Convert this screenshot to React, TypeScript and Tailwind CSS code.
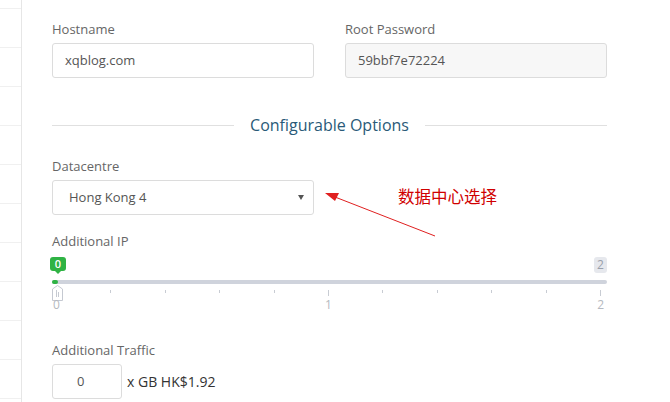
import React from "react"

const font = { fontFamily: '"Open Sans", "Noto Sans CJK SC", sans-serif' }

function Sidebar() {
  return (
    <div className="w-[22px] shrink-0 border-r border-[#e6e6e6] pt-[8px]">
      {Array.from({ length: 11 }).map((_, i) => (
        <div key={i} className="h-[39px] border-t border-[#f0f0f0]" />
      ))}
    </div>
  )
}

function Field({ label, children }: { label: string; children: React.ReactNode }) {
  return (
    <div className="flex flex-col">
      <label className="text-[13px] leading-[18px] text-[#666] mb-[5px]">{label}</label>
      {children}
    </div>
  )
}

function IpSlider() {
  const ticks = Array.from({ length: 11 })
  return (
    <div className="relative h-[62px] w-full">
      {/* value bubble */}
      <div className="absolute left-[-2px] top-[7px] flex flex-col items-center">
        <div className="h-[14px] w-[16px] rounded-[3px] bg-[#2fb344] text-white text-[11px] leading-[14px] text-center font-semibold">0</div>
        <div className="h-0 w-0 border-x-[3px] border-x-transparent border-t-[3px] border-t-[#2fb344]" />
      </div>
      {/* max bubble */}
      <div className="absolute right-0 top-[7px] h-[16px] w-[13px] rounded-[3px] bg-[#e6e8ed] text-[#9aa0ab] text-[12px] leading-[16px] text-center">2</div>
      {/* track */}
      <div className="absolute left-0 right-0 top-[30px] h-[4px] rounded-full bg-[#cfd3dc]" />
      <div className="absolute left-0 top-[30px] h-[4px] w-[6px] rounded-full bg-[#2fb344]" />
      {/* handle */}
      <svg className="absolute left-0 top-[35px]" width="11" height="16" viewBox="0 0 11 16">
        <path d="M5.5 0.5 L10.5 4 L10.5 15.5 L0.5 15.5 L0.5 4 Z" fill="#fff" stroke="#c5c9d1" />
        <line x1="4.5" y1="7" x2="4.5" y2="12" stroke="#c5c9d1" />
        <line x1="6.5" y1="7" x2="6.5" y2="12" stroke="#c5c9d1" />
      </svg>
      {/* ticks */}
      <div className="absolute left-[4px] right-[6px] top-[40px] flex justify-between">
        {ticks.map((_, i) => (
          <div key={i} className={`w-px bg-[#c8ccd3] ${i === 5 || i === 10 ? "h-[6px]" : "h-[3px]"}`} />
        ))}
      </div>
      <div className="absolute left-[1px] right-[3px] top-[48px] flex justify-between text-[12px] leading-[14px] text-[#b5b9c0]">
        <span>0</span>
        <span>1</span>
        <span>2</span>
      </div>
    </div>
  )
}

export default function App() {
  return (
    <div className="w-[670px] h-[402px] bg-white flex overflow-hidden" style={font}>
      <Sidebar />
      <div className="relative w-[555px] ml-[30px] pt-[20px]">
        <div className="grid grid-cols-2 gap-x-[31px]">
          <Field label="Hostname">
            <div className="h-[35px] border border-[#dcdcdc] rounded-[3px] px-[12px] flex items-center text-[13px] text-[#555]">xqblog.com</div>
          </Field>
          <Field label="Root Password">
            <div className="h-[35px] border border-[#dcdcdc] rounded-[3px] px-[12px] flex items-center text-[13px] text-[#555] bg-[#f7f7f7]">59bbf7e72224</div>
          </Field>
        </div>

        <div className="flex items-center gap-[16px] mt-[36px]">
          <div className="flex-1 h-px bg-[#e0e0e0]" />
          <h3 className="text-[16px] leading-[22px] text-[#2a5a78]">Configurable Options</h3>
          <div className="flex-1 h-px bg-[#e0e0e0]" />
        </div>

        <div className="mt-[21px] w-[262px]">
          <Field label="Datacentre">
            <div className="h-[35px] border border-[#dcdcdc] rounded-[3px] pl-[16px] pr-[9px] flex items-center justify-between text-[13px] text-[#555]">
              <span>Hong Kong 4</span>
              <span className="h-0 w-0 border-x-[3px] border-x-transparent border-t-[5px] border-t-[#555]" />
            </div>
          </Field>
        </div>

        <div className="mt-[17px]">
          <label className="block text-[13px] leading-[18px] text-[#666]">Additional IP</label>
          <IpSlider />
        </div>

        <div className="mt-[29px]">
          <label className="block text-[13px] leading-[18px] text-[#666] mb-[5px]">Additional Traffic</label>
          <div className="flex items-center gap-[5px]">
            <div className="h-[35px] w-[70px] border border-[#dcdcdc] rounded-[3px] flex items-center pl-[24px] text-[13px] text-[#555]">0</div>
            <span className="text-[14px] text-[#333]">x GB HK$1.92</span>
          </div>
        </div>

        {/* annotation */}
        <svg className="absolute left-[273px] top-[186px]" width="112" height="52" viewBox="0 0 112 52">
          <line x1="110" y1="50" x2="10" y2="11" stroke="#e02020" strokeWidth="1" />
          <path d="M0 7 L14 7 L10 15 Z" fill="#e02020" />
        </svg>
        <div className="absolute left-[346px] top-[185px] text-[16.5px] leading-[22px] text-[#d00000]" style={{ fontFamily: '"Noto Sans CJK SC", sans-serif' }}>
          数据中心选择
        </div>
      </div>
    </div>
  )
}
